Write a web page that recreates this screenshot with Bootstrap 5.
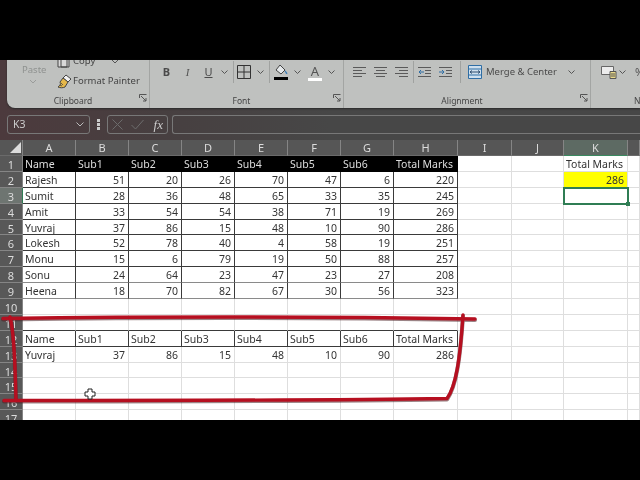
<!DOCTYPE html>
<html lang="en">
<head>
<meta charset="utf-8">
<title>Excel sheet</title>
<link rel="stylesheet" href="https://cdn.jsdelivr.net/npm/bootstrap@5.3.0/dist/css/bootstrap.min.css">
<style>
html,body{margin:0;background:#000;overflow:hidden}
.xl-frame{width:640px;height:480px;background:#000;font-family:"Noto Sans","Open Sans",sans-serif;filter:blur(.35px)}
.xl-band{height:60px;flex:none;background:#000}
.xl-win{height:80px;flex:none;background:linear-gradient(90deg,#4c3a3d 0,#473f40 160px,#474747 330px)}
.xl-panel{height:48px;flex:none;margin-left:7px;background:#bfc1bf;border-bottom-left-radius:8px;overflow:hidden;box-shadow:0 1px 2px #2a2a2a}
.xl-group{flex:none;height:48px;border-right:1px solid #a3a5a3;color:#444}
.g-clip{width:143px}.g-font{width:194px}.g-align{width:247px}.g-num{flex:1 1 0;border-right:0;min-width:0}
.xl-tools{height:34px;flex:none;padding-top:1px}
.g-font .xl-tools{padding-left:6px}.g-align .xl-tools{padding-left:9px}.g-num .xl-tools{padding-left:10px}
.xl-foot{height:14px;font-size:8.5px;line-height:13px}
.xl-foot span:first-child{flex:1 1 0;text-align:center;white-space:nowrap;overflow:hidden}
.xl-launch{width:8px;height:8px;flex:none;margin-right:2px}
.num-foot{padding-left:43px}
.tb{height:22px;flex:none;display:flex;align-items:center;justify-content:center}
.w13{width:13px}.w14{width:14px}.w16{width:16px}.w20{width:20px}.w21{width:21px}
.tb-b{font-weight:700;font-size:11px;color:#4a4a4a}
.tb-i{font-style:italic;font-size:11px;font-family:"Liberation Serif",serif;color:#555}
.tb-u{font-size:11px;color:#4a4a4a;text-decoration:underline}
.chv{width:10px;height:22px;flex:none;display:flex;align-items:center;justify-content:center}
.sep{height:22px;flex:none;display:flex;justify-content:center}
.sep::before{content:"";width:1px;height:22px;background:#a0a2a0}
.s8{width:8px}.s9{width:9px}.s10{width:10px}.s16{width:16px}
.al{margin-right:8px}
.fc-wrap{margin-left:6px;flex-direction:column}
.fc-a{font-size:13px;line-height:13px;color:#555;border-bottom:3px solid #fff;padding:0 3px;margin-top:1px}
.fc-chv{margin-left:4px}
.pst{width:50px;flex:none;padding-left:15px;font-size:9.5px;color:#8f9290;line-height:16px;padding-top:1px}
.pst svg{display:block;margin:1px 0 0 7px}
.cp{margin-top:-10px;font-size:9.5px;color:#444;line-height:20px}
.cp-row{height:20px;white-space:nowrap}
.cp-row svg{flex:none}
.cp-row span{margin-left:1px}
.mg-label{width:80px;flex:none;font-size:9.5px;color:#4a4a4a;white-space:nowrap;margin-left:4px;justify-content:flex-start}
.pct{font-size:11px;color:#555;margin-left:8px}
.xl-fbar{height:25px;flex:none;padding:0 0 6px 7px;color:#ccc}
.xl-box{height:19px;border:1px solid #787878;border-radius:3px;font-size:10.5px;line-height:17px}
.b-name{width:83px;flex:none;padding:0 5px}
.b-dots{width:17px;flex:none;display:flex;align-items:center;justify-content:center}
.b-fx{width:61px;flex:none;padding:0 4px}
.b-fx i{font-family:"Liberation Serif",serif;font-size:13px;color:#ccc;margin-left:auto}
.b-in{flex:1 1 0;margin-left:4px;border-right:0;border-radius:3px 0 0 3px}
.xl-sheet{height:280px;flex:none;overflow:hidden;background:#fff}
.xl-grid{table-layout:fixed;width:640px;border-collapse:separate;border-spacing:0;font-size:10.5px;--bs-table-bg:transparent}
.xl-grid col:nth-child(1){width:23px}
.xl-grid col:nth-child(n+2):nth-child(-n+8){width:53px}
.xl-grid col:nth-child(9){width:64px}
.xl-grid col:nth-child(10){width:54px}
.xl-grid col:nth-child(11){width:52px}
.xl-grid col:nth-child(12){width:64px}
.xl-grid col:nth-child(13){width:12px}
.xl-grid>tbody>tr>*{height:15.9px;padding:3px 3px 0 2px;line-height:11px;color:#333;white-space:nowrap;overflow:hidden;border-width:0 1px 1px 0;border-style:solid;border-color:#dedede;background:#fff;vertical-align:top;font-weight:400}
.xl-grid>tbody>tr>th{padding:3px 0 0;text-align:center;background:#585858;color:#dcdcdc;border-color:#858585;font-size:11px}
.xl-grid>tbody>tr.r-head>th{height:16px;padding:0;line-height:15px;vertical-align:middle;background:#565656;border-bottom-color:#6a6a6a}
.xl-grid>tbody>tr>th.on{background:#6e7571;border-right:1px solid #2f7d54}
.xl-grid>tbody>tr.r-head>th.on{background:#5d6a63;border-bottom:1px solid #3a8a60;border-right-color:#858585}
.xl-grid>tbody>tr>td.n{text-align:right}
.xl-grid>tbody>tr>td.hd{background:#000;color:#dedede;border-color:#000}
.xl-grid>tbody>tr>td.bx{border-color:#3a3a3a}
.xl-grid>tbody>tr>td.bf{border-right-color:#3a3a3a;border-bottom-color:#8a8a8a}
.xl-grid>tbody>tr>td.bt{border-bottom-color:#3a3a3a}
.xl-grid>tbody>tr>td.yl{background:#ffff00}
.xl-grid>tbody>tr>td.sel{position:relative;overflow:visible;outline:2px solid #2f7d54;outline-offset:-1px}
.xl-grid>tbody>tr>td.sel::after{content:"";position:absolute;right:-3px;bottom:-3px;width:4px;height:4px;background:#2f7d54}
.xl-ink{position:absolute;left:0;top:0;width:640px;height:280px;pointer-events:none}
</style>
</head>
<body>
<div class="xl-frame d-flex flex-column">
  <div class="xl-band"></div>
  <div class="xl-win d-flex flex-column">
    <div class="xl-panel d-flex">
      <section class="xl-group g-clip d-flex flex-column">
        <div class="xl-tools d-flex align-items-start">
          <div class="pst">Paste
            <svg width="8" height="5" viewBox="0 0 8 5"><path d="M1 1l3 3 3-3" fill="none" stroke="#9a9c9a" stroke-width="1"/></svg>
          </div>
          <div class="cp">
            <div class="cp-row d-flex align-items-center">
              <svg width="15" height="14" viewBox="0 0 15 14"><path d="M1 2h9v11H1zM4 5h8v8H4z" fill="#d8d8d8" stroke="#444"/></svg>
              <span>Copy</span>
              <svg class="ms-3" width="8" height="5" viewBox="0 0 8 5"><path d="M1 1l3 3 3-3" fill="none" stroke="#555"/></svg>
            </div>
            <div class="cp-row d-flex align-items-center">
              <svg width="15" height="15" viewBox="0 0 15 15"><path d="M9 1l5 4-3 3-5-4z" fill="#f2f2f2" stroke="#444"/><path d="M6 4l5 4-3 5c-2 1-5 1-7 0 2-1 3-3 2-5z" fill="#e6b84a" stroke="#444"/><path d="M4 9l2 2M3 11l2 1" stroke="#444" stroke-width=".8"/></svg>
              <span>Format Painter</span>
            </div>
          </div>
        </div>
        <div class="xl-foot d-flex"><span>Clipboard</span>
          <svg class="xl-launch" viewBox="0 0 8 8"><path d="M.5 4V.5H7.5M2 2l5 5M7 4v3H4" fill="none" stroke="#555"/></svg>
        </div>
      </section>
      <section class="xl-group g-font d-flex flex-column">
        <div class="xl-tools d-flex align-items-start">
          <div class="tb w21 tb-b">B</div>
          <div class="tb w21 tb-i">I</div>
          <div class="tb w21 tb-u">U</div>
          <div class="chv"><svg width="7" height="4" viewBox="0 0 7 4"><path d="M.5.5l3 3 3-3" fill="none" stroke="#555"/></svg></div>
          <div class="sep s8"></div>
          <div class="tb w14"><svg width="14" height="14" viewBox="0 0 14 14"><path d="M.5.5h13v13H.5zM7 .5v13M.5 7h13" fill="none" stroke="#333"/></svg></div>
          <div class="chv ms-1"><svg width="7" height="4" viewBox="0 0 7 4"><path d="M.5.5l3 3 3-3" fill="none" stroke="#555"/></svg></div>
          <div class="sep s9"></div>
          <div class="tb w14"><svg width="14" height="16" viewBox="0 0 14 16"><path d="M6 1l5 5-4 4-5-4z" fill="#e4e8ea" stroke="#444"/><path d="M11 7c1 1 2 2 1.500 3" fill="none" stroke="#3f7fb5" stroke-width="1.500"/><path d="M0 13h14v3H0z" fill="#000"/></svg></div>
          <div class="chv ms-1"><svg width="7" height="4" viewBox="0 0 7 4"><path d="M.5.5l3 3 3-3" fill="none" stroke="#555"/></svg></div>
          <div class="tb w14 fc-wrap"><span class="fc-a">A</span></div>
          <div class="chv fc-chv"><svg width="7" height="4" viewBox="0 0 7 4"><path d="M.5.5l3 3 3-3" fill="none" stroke="#555"/></svg></div>
        </div>
        <div class="xl-foot d-flex"><span>Font</span>
          <svg class="xl-launch" viewBox="0 0 8 8"><path d="M.5 4V.5H7.5M2 2l5 5M7 4v3H4" fill="none" stroke="#555"/></svg>
        </div>
      </section>
      <section class="xl-group g-align d-flex flex-column">
        <div class="xl-tools d-flex align-items-start">
          <div class="tb w13 al"><svg width="13" height="13" viewBox="0 0 13 13"><path d="M0 1.500h13M0 4.500h9M0 7.500h13M0 10.500h9" stroke="#5a5a5a"/></svg></div>
          <div class="tb w13 al"><svg width="13" height="13" viewBox="0 0 13 13"><path d="M0 1.500h13M2 4.500h9M0 7.500h13M2 10.500h9" stroke="#5a5a5a"/></svg></div>
          <div class="tb w13"><svg width="13" height="13" viewBox="0 0 13 13"><path d="M0 1.500h13M4 4.500h9M0 7.500h13M4 10.500h9" stroke="#5a5a5a"/></svg></div>
          <div class="sep s10"></div>
          <div class="tb w13 al"><svg width="13" height="13" viewBox="0 0 13 13"><path d="M0 1.500h13M7 4.500h6M7 7.500h6M0 10.500h13" stroke="#5a5a5a"/><path d="M1 6h5M1 6l2-2M1 6l2 2" fill="none" stroke="#2f6ea5"/></svg></div>
          <div class="tb w13"><svg width="13" height="13" viewBox="0 0 13 13"><path d="M0 1.500h13M7 4.500h6M7 7.500h6M0 10.500h13" stroke="#5a5a5a"/><path d="M0 6h5M5 6l-2-2M5 6l-2 2" fill="none" stroke="#2f6ea5"/></svg></div>
          <div class="sep s16"></div>
          <div class="tb w14"><svg width="14" height="14" viewBox="0 0 14 14"><path d="M.5.5h13v13H.5z" fill="#cfe0ee" stroke="#2f6ea5"/><path d="M0 4h14M0 10h14" stroke="#2f6ea5"/><path d="M2 7h10M2 7l2-1.500M2 7l2 1.500M12 7l-2-1.500M12 7l-2 1.500" fill="none" stroke="#2f4f70"/></svg></div>
          <div class="tb mg-label">Merge &amp; Center</div>
          <div class="chv"><svg width="7" height="4" viewBox="0 0 7 4"><path d="M.5.5l3 3 3-3" fill="none" stroke="#555"/></svg></div>
        </div>
        <div class="xl-foot d-flex"><span>Alignment</span>
          <svg class="xl-launch" viewBox="0 0 8 8"><path d="M.5 4V.5H7.5M2 2l5 5M7 4v3H4" fill="none" stroke="#555"/></svg>
        </div>
      </section>
      <section class="xl-group g-num d-flex flex-column overflow-hidden">
        <div class="xl-tools d-flex align-items-start">
          <div class="tb w16"><svg width="16" height="14" viewBox="0 0 16 14"><path d="M.5 1.500h12v8H.5z" fill="#ececec" stroke="#666"/><path d="M9 6.500h6v7H9z" fill="#e9d98a" stroke="#555"/><path d="M10 9h4M10 11h4" stroke="#555"/></svg></div>
          <div class="chv"><svg width="7" height="4" viewBox="0 0 7 4"><path d="M.5.5l3 3 3-3" fill="none" stroke="#555"/></svg></div>
          <div class="tb pct">%</div>
        </div>
        <div class="xl-foot num-foot">N</div>
      </section>
    </div>
    <div class="xl-fbar d-flex mt-auto">
      <div class="xl-box b-name d-flex align-items-center justify-content-between"><span>K3</span>
        <svg width="8" height="5" viewBox="0 0 8 5"><path d="M.5.5l3.500 3.500 3.500-3.500" fill="none" stroke="#bbb"/></svg>
      </div>
      <div class="b-dots"><svg width="3" height="11" viewBox="0 0 3 11"><path d="M0 0h3v3H0zM0 4h3v3H0zM0 8h3v3H0z" fill="#ccc"/></svg></div>
      <div class="xl-box b-fx d-flex align-items-center gap-2">
        <svg width="11" height="11" viewBox="0 0 11 11"><path d="M.5.5l10 10M10.500.5l-10 10" stroke="#6c6c6c"/></svg>
        <svg width="13" height="11" viewBox="0 0 13 11"><path d="M.5 6l4 4 8-9" fill="none" stroke="#6c6c6c"/></svg>
        <i>fx</i>
      </div>
      <div class="xl-box b-in"></div>
    </div>
  </div>
  <div class="xl-sheet position-relative">
    <table class="table xl-grid mb-0">
      <colgroup><col><col><col><col><col><col><col><col><col><col><col><col><col></colgroup>
      <tbody>
        <tr class="r-head"><th><svg class="d-block ms-auto" width="13" height="13" viewBox="0 0 13 13"><path d="M12 1v11H1z" fill="#dcdcdc"/></svg></th><th>A</th><th>B</th><th>C</th><th>D</th><th>E</th><th>F</th><th>G</th><th>H</th><th>I</th><th>J</th><th class="on">K</th><th></th></tr>
        <tr><th>1</th><td class="hd">Name</td><td class="hd">Sub1</td><td class="hd">Sub2</td><td class="hd">Sub3</td><td class="hd">Sub4</td><td class="hd">Sub5</td><td class="hd">Sub6</td><td class="hd">Total Marks</td><td></td><td></td><td>Total Marks</td><td></td></tr>
        <tr><th>2</th><td class="bx">Rajesh</td><td class="bx n">51</td><td class="bx n">20</td><td class="bx n">26</td><td class="bx n">70</td><td class="bx n">47</td><td class="bx n">6</td><td class="bx n">220</td><td></td><td></td><td class="yl n">286</td><td></td></tr>
        <tr><th class="on">3</th><td class="bx">Sumit</td><td class="bx n">28</td><td class="bx n">36</td><td class="bx n">48</td><td class="bx n">65</td><td class="bx n">33</td><td class="bx n">35</td><td class="bx n">245</td><td></td><td></td><td class="sel"></td><td></td></tr>
        <tr><th>4</th><td class="bx">Amit</td><td class="bx n">33</td><td class="bx n">54</td><td class="bx n">54</td><td class="bx n">38</td><td class="bx n">71</td><td class="bx n">19</td><td class="bx n">269</td><td></td><td></td><td></td><td></td></tr>
        <tr><th>5</th><td class="bx">Yuvraj</td><td class="bx n">37</td><td class="bx n">86</td><td class="bx n">15</td><td class="bx n">48</td><td class="bx n">10</td><td class="bx n">90</td><td class="bx n">286</td><td></td><td></td><td></td><td></td></tr>
        <tr><th>6</th><td class="bx">Lokesh</td><td class="bx n">52</td><td class="bx n">78</td><td class="bx n">40</td><td class="bx n">4</td><td class="bx n">58</td><td class="bx n">19</td><td class="bx n">251</td><td></td><td></td><td></td><td></td></tr>
        <tr><th>7</th><td class="bx">Monu</td><td class="bx n">15</td><td class="bx n">6</td><td class="bx n">79</td><td class="bx n">19</td><td class="bx n">50</td><td class="bx n">88</td><td class="bx n">257</td><td></td><td></td><td></td><td></td></tr>
        <tr><th>8</th><td class="bf">Sonu</td><td class="bf n">24</td><td class="bf n">64</td><td class="bf n">23</td><td class="bf n">47</td><td class="bf n">23</td><td class="bf n">27</td><td class="bf n">208</td><td></td><td></td><td></td><td></td></tr>
        <tr><th>9</th><td class="bf">Heena</td><td class="bf n">18</td><td class="bf n">70</td><td class="bf n">82</td><td class="bf n">67</td><td class="bf n">30</td><td class="bf n">56</td><td class="bf n">323</td><td></td><td></td><td></td><td></td></tr>
        <tr><th>10</th><td></td><td></td><td></td><td></td><td></td><td></td><td></td><td></td><td></td><td></td><td></td><td></td></tr>
        <tr><th>11</th><td class="bt"></td><td class="bt"></td><td class="bt"></td><td class="bt"></td><td class="bt"></td><td class="bt"></td><td class="bt"></td><td class="bt"></td><td></td><td></td><td></td><td></td></tr>
        <tr><th>12</th><td class="bx">Name</td><td class="bx">Sub1</td><td class="bx">Sub2</td><td class="bx">Sub3</td><td class="bx">Sub4</td><td class="bx">Sub5</td><td class="bx">Sub6</td><td class="bx">Total Marks</td><td></td><td></td><td></td><td></td></tr>
        <tr><th>13</th><td>Yuvraj</td><td class="n">37</td><td class="n">86</td><td class="n">15</td><td class="n">48</td><td class="n">10</td><td class="n">90</td><td class="n">286</td><td></td><td></td><td></td><td></td></tr>
        <tr><th>14</th><td></td><td></td><td></td><td></td><td></td><td></td><td></td><td></td><td></td><td></td><td></td><td></td></tr>
        <tr><th>15</th><td></td><td></td><td></td><td></td><td></td><td></td><td></td><td></td><td></td><td></td><td></td><td></td></tr>
        <tr><th>16</th><td></td><td></td><td></td><td></td><td></td><td></td><td></td><td></td><td></td><td></td><td></td><td></td></tr>
        <tr><th>17</th><td></td><td></td><td></td><td></td><td></td><td></td><td></td><td></td><td></td><td></td><td></td><td></td></tr>
      </tbody>
    </table>
    <svg class="xl-ink" viewBox="0 140 640 280">
      <g fill="none" stroke-linecap="round" stroke-linejoin="round">
        <g stroke="#4a2024" stroke-width="4" opacity=".55" transform="translate(0 1)">
          <path d="M3 318.500C120 317 320 316.500 475 319"/>
          <path d="M4 400.500C150 400.500 320 400.500 447 398.500C456 386 460 360 463 315"/>
          <path d="M10 317C15 335 15 370 16 400"/>
        </g>
        <g stroke="#b60f20" stroke-width="3.400">
          <path d="M3 318.500C120 317 320 316.500 475 319"/>
          <path d="M4 400.500C150 400.500 320 400.500 447 398.500C456 386 460 360 463 315"/>
          <path d="M10 317C15 335 15 370 16 400"/>
        </g>
      </g>
      <path d="M88 389h4v3h3v4h-3v3h-4v-3h-3v-4h3z" fill="#fff" stroke="#222"/>
    </svg>
  </div>
  <div class="xl-band"></div>
</div>
<script src="https://cdn.jsdelivr.net/npm/bootstrap@5.3.0/dist/js/bootstrap.bundle.min.js"></script>
</body>
</html>
